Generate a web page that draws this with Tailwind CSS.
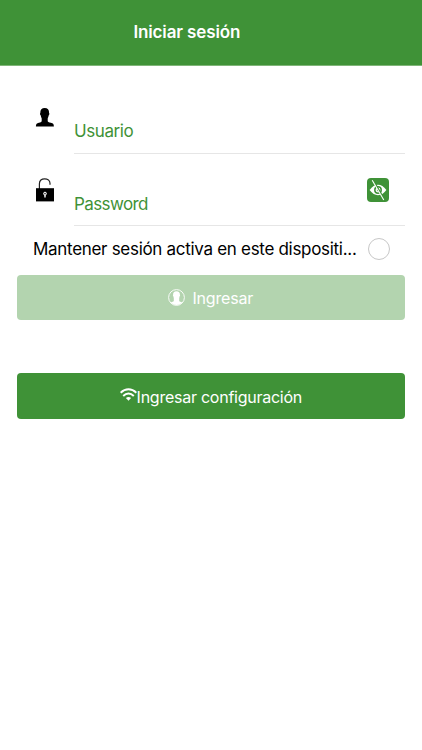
<!DOCTYPE html>
<html lang="es">
<head>
<meta charset="utf-8">
<meta name="viewport" content="width=device-width, initial-scale=1">
<title>Iniciar sesión</title>
<script src="https://cdn.jsdelivr.net/npm/@tailwindcss/browser@4"></script>
</head>
<body class="h-[750px] overflow-hidden bg-white font-['Inter','Liberation_Sans',sans-serif] text-[17px] leading-6 text-black">
<header class="flex h-[66px] items-start border-b border-[#7fb578] bg-[#3f9237] pt-5 pl-[133.4px]">
  <h1 class="text-[17px] font-semibold tracking-[-0.13px] whitespace-nowrap text-white">Iniciar sesión</h1>
</header>
<main class="px-[16.6px]">
  <div class="flex h-[88px] pl-[18.4px]">
    <svg class="mt-[42px] h-[19px] w-5 shrink-0" viewBox="0 0 20 19"><path d="M9.7 0C6.8 0 5.2 1.8 5.3 4.9C4.7 5.1 5.1 7 5.8 7.5C6 9.1 6.4 9.6 6.7 10.4V13.2C6.2 14.2 4.3 14.5 2.5 15.3C1.1 16 1 17 .9 18.4H18.9C18.8 17 18.7 16 17.3 15.3C15.5 14.5 13.2 14.2 12.7 13.2V10.4C13 9.6 13.4 9.1 13.6 7.5C14.3 7 14.7 5.1 14.1 4.9C14.2 1.8 12.6 0 9.7 0Z"/></svg>
    <label class="ml-[19px] flex-1 border-b border-[#e6e6e6] pt-[53px] text-[17px] tracking-[-0.4px] text-[#3f9237]">Usuario</label>
  </div>
  <div class="flex h-[72px] pl-[18.4px]">
    <svg class="mt-6 h-6 w-5 shrink-0" viewBox="0 0 20 24"><path d="M4.4 11V5.8C4.4 2.5 6.6.8 9.6.8S15 2.6 15 5.2V6.8" fill="none" stroke="#222" stroke-width="1.2"/><path d="M1 10.2H19V23.4H1Z"/><circle cx="10" cy="15.6" r="1.4" fill="#555" stroke="#fff"/><path d="M10 17V19.4" stroke="#fff" stroke-width="1.4"/></svg>
    <div class="ml-[19px] flex flex-1 border-b border-[#e6e6e6]">
      <label class="flex-1 pt-[38px] text-[17px] tracking-[-0.6px] text-[#3f9237]">Password</label>
      <button class="mt-6 mr-4 flex h-[24px] w-[22px] items-center justify-center rounded-[4px] bg-[#3f9237]" aria-label="Mostrar password">
        <svg class="h-[22px] w-[18px]" viewBox="0 0 18 22"><path d="M.6 11Q4.5 5.8 9 5.8T17.4 11Q13.5 16.2 9 16.2T.6 11Z" fill="#fff"/><circle cx="9" cy="11" r="3.2" fill="#fff" stroke="#3f9237" stroke-width="1.5"/><circle cx="9" cy="11" r="1.2" fill="#3f9237"/><path d="M4 1.3L15.6 21" stroke="#3f9237" stroke-width="1.8"/><path d="M3.2 1.3L14.8 21" stroke="#fff" stroke-width="1.1"/></svg>
      </button>
    </div>
  </div>
  <div class="flex h-[49px] items-start pr-[15.4px] pl-[16.4px]">
    <span class="mt-[11px] shrink-0 tracking-[-0.3px] whitespace-nowrap">Mantener sesión activa en este dispositi...</span>
    <span class="mt-3 ml-auto size-[22px] shrink-0 rounded-full border border-[#c7c7c7]"></span>
  </div>
  <button class="flex h-[45px] w-full items-center rounded-[4px] bg-[#b3d4af] pl-[151.4px] text-white">
    <svg class="h-[17px] w-[17px]" viewBox="0 0 17 17"><circle cx="8.5" cy="8.5" r="7.9" fill="none" stroke="#fff" stroke-width=".9"/><path d="M8.5 2.2C6.2 2.2 5 3.6 5.1 5.7C4.7 6.1 5 7.2 5.5 7.6L5.8 9.6V12C5.3 12.6 4.2 12.9 2.8 13.5Q5.4 16 8.5 16T14.2 13.5C12.8 12.9 11.7 12.6 11.2 12V9.6L11.5 7.6C12 7.2 12.3 6.1 11.9 5.7C12 3.6 10.8 2.2 8.5 2.2Z" fill="#fff"/></svg>
    <span class="ml-[7.5px] text-[16px] tracking-[-0.2px]">Ingresar</span>
  </button>
  <button class="mt-[53px] flex h-[46px] w-full items-center rounded-[4px] bg-[#3f9237] pl-[103px] text-white">
    <svg class="mb-[3px] h-[13px] w-[17px]" viewBox="0 0 17 13" fill="none" stroke="#fff" stroke-width="2"><path d="M.6 4.7Q4.2 1.3 8.5 1.3T16.4 4.7M3.2 8Q5.7 5.6 8.5 5.6T13.8 8"/><path d="M5.9 10.1Q8.5 7.8 11.1 10.1L8.5 12.8Z" fill="#fff" stroke="none"/></svg>
    <span class="mt-px text-[16px] tracking-[-0.25px] whitespace-nowrap">Ingresar configuración</span>
  </button>
</main>
</body>
</html>
